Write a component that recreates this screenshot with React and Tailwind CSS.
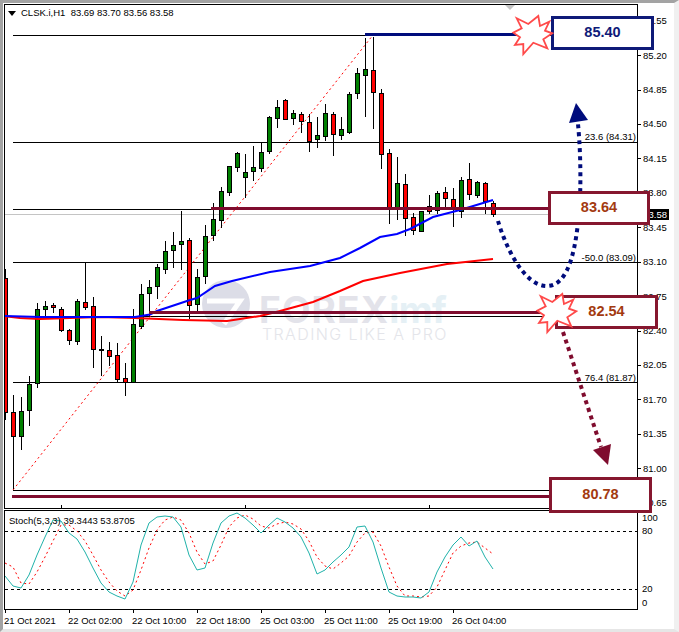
const CANDLES = [
  [269,278,412,419,'r'],[395,412,436,488,'r'],[397,411,436,449,'g'],[376,384,410,425,'g'],[303,309,383,387,'g'],
  [301,306,309,317,'g'],[303,305,307,312,'r'],[307,309,330,331,'r'],[329,330,340,344,'r'],[299,301,341,344,'g'],
  [263,302,307,309,'r'],[297,306,349,367,'r'],[336,349,350,375,'k'],[342,350,356,365,'r'],[343,355,379,382,'r'],
  [363,378,382,395,'r'],[309,324,382,382,'g'],[284,294,326,328,'g'],[280,287,293,315,'g'],[264,267,286,298,'g'],
  [241,251,269,273,'g'],[232,245,250,267,'g'],[211,241,244,269,'g'],[238,240,305,318,'r'],[269,277,304,311,'g'],
  [225,236,276,283,'g'],[203,219,235,240,'g'],[187,191,220,227,'g'],[166,166,192,195,'g'],[152,153,167,171,'g'],
  [154,172,177,197,'g'],[146,167,171,180,'g'],[142,152,168,171,'g'],[116,117,151,153,'g'],[100,107,118,127,'g'],
  [99,100,119,119,'r'],[110,113,118,124,'g'],[112,114,121,132,'r'],[114,122,141,151,'r'],[117,135,139,147,'g'],
  [104,113,136,140,'g'],[112,114,134,155,'r'],[117,129,135,139,'g'],[92,94,132,133,'g'],[68,73,93,98,'g'],
  [38,69,75,116,'g'],[37,70,92,128,'r'],[89,93,154,168,'r'],[149,153,208,223,'r'],[157,183,208,219,'g'],
  [174,184,218,235,'r'],[213,217,230,234,'r'],[211,211,231,231,'g'],[195,206,211,213,'r'],[191,193,210,213,'g'],
  [187,192,198,207,'r'],[188,199,208,226,'r'],[177,180,211,217,'g'],[163,179,194,199,'r'],[181,182,195,197,'g'],
  [182,183,201,213,'r'],[201,203,214,216,'r'],
];
const FILL = { r: '#ff0000', g: '#008000', k: '#000000' };

const BLUE_MA = '4,316 40,317 100,317 135,317 150,314.5 157,311 190,300 197,298 215,286 232,281 270,272 310,266 340,258 360,248 380,237 397,234 410,229 433,217 460,210 493,200';
const RED_MA = '4,316 20,318 40,319 100,317 135,318 183,320 227,321 240,319 260,316 280,311 313,302 340,291 363,281 400,273 447,264 493,259';

const TEAL = [576,586,588,575,555,537,520,521,533,539,552,568,583,592,596,599,582,545,523,517,516,517,527,555,570,568,543,523,516,513,518,525,533,525,518,522,528,537,553,574,570,562,555,547,527,526,542,568,592,596,597,597,598,592,572,557,545,537,546,541,557,569];
const SIGNAL = [563,567,583,584,572,557,541,525,525,531,541,555,570,582,591,596,590,570,548,530,520,517,520,533,552,564,561,545,527,518,515,519,526,528,524,522,524,529,541,557,566,569,563,556,542,533,532,546,567,586,596,596,597,596,587,570,553,546,543,542,548,554];
const toPts = (ys) => ys.map((y, i) => `${5 + 8 * i},${y}`).join(' ');

const PRICES = ['85.55','85.20','84.85','84.50','84.15','83.80','83.45','83.10','82.75','82.40','82.05','81.70','81.35','81.00','80.65'];
const TIMES = ['21 Oct 2021','22 Oct 02:00','22 Oct 10:00','22 Oct 18:00','25 Oct 03:00','25 Oct 11:00','25 Oct 19:00','26 Oct 04:00'];
const STAR = '516.7,18.3 528.3,24 538.3,16 540,26 549.3,21.7 545,30.7 552.3,33.3 543.3,39.3 547.3,48.3 533.3,42.7 523.3,54 523.3,44 515,45 520,37.3 513.3,32.7 521.7,28.3';

function Hline({ y, x1 = 5, x2 = 637, h = 1, fill = '#000' }) {
  return <rect x={x1} y={y} width={x2 - x1} height={h} fill={fill} />;
}

function Candle({ c, i }) {
  const x = 5 + 8 * i;
  const [wt, bt, bb, wb, col] = c;
  return (
    <g>
      <rect x={x} y={wt} width="1" height={wb - wt + 1} fill="#000" />
      <rect x={x - 2} y={bt} width="5" height={bb - bt + 1} fill="#000" />
      {bb - bt > 1 && <rect x={x - 1} y={bt + 1} width="3" height={bb - bt - 1} fill={FILL[col]} />}
    </g>
  );
}

function Callout({ pos, border, color, children }) {
  return (
    <div className={`absolute flex items-center justify-center bg-white border-[3px] font-bold text-[14.5px] ${pos} ${border} ${color}`}>
      {children}
    </div>
  );
}

function Fib({ pos, children }) {
  return <span className={`absolute right-[1px] leading-[12px] ${pos}`}>{children}</span>;
}

export default function App() {
  return (
    <div
      className="relative w-[679px] h-[632px] overflow-hidden bg-white border-t-[3px] border-l-[3px] border-t-[#a3a3a3] border-l-[#a3a3a3] border-r-[5px] border-r-[#f0f0f0] border-b-[3px] border-b-[#e6e6e6] pt-px pl-px text-[9.5px] text-black"
      style={{ fontFamily: '"Liberation Sans", Arial, sans-serif' }}
    >
      {/* main pane + price axis */}
      <div className="flex h-[505px]">
        <div className="relative w-[634px] h-[505px] shrink-0 border border-black overflow-hidden">
          {/* watermark */}
          <div className="absolute left-[254px] top-[288px] flex flex-col" style={{ fontFamily: 'Inter, sans-serif' }}>
            <div className="flex items-baseline leading-[34px] text-[37px] font-bold">
              <span className="tracking-[1.2px] text-[#e3e3ea]">FOREX</span>
              <span className="tracking-[-0.5px] text-[#e5f0f5]">imf</span>
            </div>
            <span className="ml-[3px] leading-[14px] text-[16px] font-light tracking-[1.4px] text-[#e4e5ea]">TRADING LIKE A PRO</span>
          </div>
          <svg className="absolute inset-0" width="632" height="503" viewBox="5 5 632 503">
            <circle cx="226" cy="304" r="24" fill="#dcdde7" />
            <path d="M207 301H240L224 324" fill="none" stroke="#fff" strokeWidth="5" />
            <g shapeRendering="crispEdges">
              <Hline y={35} x1={13} />
              <Hline y={142} x1={13} />
              <Hline y={209} x1={13} />
              <Hline y={214} fill="#c4c4c4" />
              <Hline y={262} x1={13} />
              <Hline y={316} x1={5} />
              <Hline y={382} x1={13} />
              <Hline y={490} x1={13} />
              <rect x="61" y="505" width="1" height="3" fill="#000" />
              <rect x="245" y="505" width="1" height="3" fill="#000" />
              <rect x="429" y="505" width="1" height="3" fill="#000" />
            </g>
            <line x1="13" y1="490" x2="373" y2="35" stroke="#ff0000" strokeWidth="1" strokeDasharray="2 3" />
            <g shapeRendering="crispEdges">
              {CANDLES.map((c, i) => <Candle key={i} c={c} i={i} />)}
            </g>
            <polyline points={RED_MA} fill="none" stroke="#ff0000" strokeWidth="2" />
            <polyline points={BLUE_MA} fill="none" stroke="#0000ff" strokeWidth="2" />
            <g shapeRendering="crispEdges">
              <Hline y={33} x1={365} x2={516} h={3} fill="#000c7c" />
              <Hline y={207} x1={211} x2={552} h={3} fill="#7f0c2e" />
              <Hline y={311} x1={149} x2={546} h={3} fill="#7f0c2e" />
              <Hline y={495} x1={12} x2={552} h={3} fill="#7f0c2e" />
            </g>
            <polygon points="505,5 515,5 510,10" fill="#c4c4c4" />
          </svg>
          <div className="absolute left-[3px] top-[2px] flex items-center gap-[5px] leading-[12px] whitespace-pre">
            <svg width="8" height="5" viewBox="0 0 8 5" className="shrink-0"><polygon points="0,0 8,0 4,5" fill="#000" /></svg>
            <span>CLSK.i,H1  83.69 83.70 83.56 83.58</span>
          </div>
          <Fib pos="top-[126px]">23.6 (84.31)</Fib>
          <Fib pos="top-[247px]">-50.0 (83.09)</Fib>
          <Fib pos="top-[367px]">76.4 (81.87)</Fib>
        </div>
        <div className="flex flex-col">
          {PRICES.map((p) => (
            <div key={p} className="flex h-[34.43px] shrink-0 items-center gap-[2px]">
              <span className="w-[3px] h-px bg-black" />
              <span className="leading-[12px]">{p}</span>
            </div>
          ))}
        </div>
      </div>

      {/* stochastic pane + axis */}
      <div className="flex h-[100px] mt-px">
        <div className="relative w-[634px] h-[100px] shrink-0 border border-black overflow-hidden">
          <svg className="absolute inset-0" width="632" height="98" viewBox="5 511 632 98">
            <g shapeRendering="crispEdges">
              <line x1="5" y1="531.5" x2="637" y2="531.5" stroke="#000" strokeDasharray="3 3" />
              <line x1="5" y1="589.5" x2="637" y2="589.5" stroke="#000" strokeDasharray="3 3" />
            </g>
            <polyline points={toPts(SIGNAL)} fill="none" stroke="#ff0000" strokeDasharray="2 3" />
            <polyline points={toPts(TEAL)} fill="none" stroke="#20b2aa" />
          </svg>
          <span className="absolute left-[4px] top-[4px] leading-[12px]">Stoch(5,3,3) 39.3443 53.8705</span>
        </div>
        <div className="flex flex-col pl-[4px] leading-[12px]">
          <span className="mt-[2px]">100</span>
          <span className="mt-[1px]">80</span>
          <span className="mt-[46px]">20</span>
          <span className="mt-[2px]">0</span>
        </div>
      </div>

      {/* time axis */}
      <div className="flex pl-px">
        {TIMES.map((t) => (
          <div key={t} className="flex flex-col w-[64px] shrink-0">
            <span className="w-px h-[3px] bg-black" />
            <span className="mt-[2px] -ml-px leading-[12px] whitespace-nowrap">{t}</span>
          </div>
        ))}
      </div>

      {/* current price tag */}
      <div className="absolute left-[637px] top-[206px] w-[29px] h-[11px] pr-[2px] bg-black text-white text-right leading-[11px]">83.58</div>

      {/* arrows drawn over the chart */}
      <svg className="absolute left-[-3px] top-[-3px]" width="679" height="632" viewBox="0 0 679 632">
        <path d="M498 221C506 248 524 285 546 286C570 287 577 245 580 200C581 170 580 145 578 124" fill="none" stroke="#000c7c" strokeWidth="4" strokeDasharray="4 4" />
        <polygon points="576,103 569,123 588,120" fill="#000c7c" />
        <line x1="563" y1="332" x2="601" y2="447" stroke="#7f0c2e" strokeWidth="4" strokeDasharray="4 4" />
        <polygon points="608,465 593,450 611,444" fill="#7f0c2e" />
      </svg>

      <Callout pos="left-[548px] top-[13px] w-[103px] h-[34px]" border="border-[#0e1a78]" color="text-[#0e1a78]">85.40</Callout>
      <Callout pos="left-[545px] top-[188px] w-[102px] h-[34px]" border="border-[#86172f]" color="text-[#a33a10]">83.64</Callout>
      <Callout pos="left-[552px] top-[292px] w-[103px] h-[34px]" border="border-[#86172f]" color="text-[#a33a10]">82.54</Callout>
      <Callout pos="left-[546px] top-[474px] w-[103px] h-[36px]" border="border-[#86172f]" color="text-[#a33a10]">80.78</Callout>

      {/* bursts */}
      <svg className="absolute left-[-3px] top-[-3px]" width="679" height="632" viewBox="0 0 679 632">
        <polygon points={STAR} fill="#fff" stroke="#ff4a4a" strokeWidth="1.8" />
        <polygon points={STAR} transform="translate(24 278)" fill="#fff" stroke="#ff4a4a" strokeWidth="1.8" />
      </svg>
    </div>
  );
}
